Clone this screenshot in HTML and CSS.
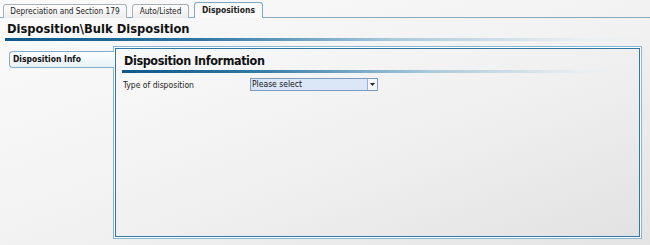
FILE: index.html
```html
<!DOCTYPE html>
<html>
<head>
<meta charset="utf-8">
<link rel="stylesheet" href="styles.css">
</head>
<body>
<div class="page">
  <div class="tabs">
    <div class="tab tab-1">Depreciation and Section 179</div>
    <div class="tab tab-2">Auto/Listed</div>
    <div class="tab tab-active">Dispositions</div>
  </div>
  <div class="title">Disposition\Bulk Disposition</div>
  <div class="title-rule"></div>
  <div class="content">
    <div class="nav">
      <div class="nav-item">Disposition Info</div>
    </div>
    <div class="panel">
      <div class="panel-inner">
        <div class="panel-title">Disposition Information</div>
        <div class="panel-rule"></div>
        <div class="row">
          <div class="label">Type of disposition</div>
          <div class="select">
            <span class="select-text">Please select</span>
            <span class="select-btn"><svg width="5" height="3" viewBox="0 0 5 3"><path d="M0 0h5L2.5 3z" fill="#222"/></svg></span>
          </div>
        </div>
      </div>
    </div>
  </div>
</div>
</body>
</html>
```
FILE: styles.css
```css
* { box-sizing: border-box; }
html, body { margin: 0; padding: 0; }
body {
  width: 650px;
  height: 245px;
  overflow: hidden;
  background: linear-gradient(160deg, #fbfbfb 0%, #f2f2f2 50%, #e4e4e4 100%);
  font-family: "DejaVu Sans Condensed", "DejaVu Sans", sans-serif;
  color: #111;
}
.page { height: 245px; display: flex; flex-direction: column; }
.tabs {
  display: flex;
  align-items: flex-end;
  gap: 5px;
  height: 18px;
  padding-left: 3px;
  border-bottom: 1px solid #86a9bf;
}
.tab {
  height: 14px;
  margin-bottom: -1px;
  border: 1px solid #a9b1b6;
  border-bottom: none;
  border-radius: 3px 3px 0 0;
  background: linear-gradient(#ffffff, #ececec);
  font-size: 8.2px;
  line-height: 13px;
  white-space: nowrap;
  text-align: center;
  color: #222;
}
.tab-1 { width: 124px; }
.tab-2 { width: 57px; }
.tab-active {
  width: 69px;
  height: 16px;
  line-height: 15px;
  border-color: #7fa9c2;
  background: #fafafa;
  font-weight: bold;
  font-size: 8.5px;
}
.title {
  font-weight: bold;
  font-size: 12.8px;
  line-height: 17px;
  padding: 2px 0 0 7px;
  height: 20px;
  color: #111;
}
.title-rule {
  height: 3px;
  margin-left: 5px;
  background: linear-gradient(90deg, #0e5889 0%, #2d77a6 30%, #a9c9dc 60%, rgba(230,238,243,0.6) 90%, rgba(240,240,240,0) 100%);
}
.content {
  display: flex;
  flex: 1;
  padding: 5px 8px 6px 9px;
}
.nav { width: 104px; padding-top: 5px; position: relative; z-index: 1; }
.nav-item {
  height: 17px;
  width: 105px;
  border: 1px solid #84aec6;
  border-right: none;
  border-radius: 4px 0 0 4px;
  background: linear-gradient(#ffffff, #e6f0f6);
  font-size: 8.5px;
  font-weight: bold;
  line-height: 15px;
  padding-left: 3px;
}
.panel {
  flex: 1;
  border: 1px solid #86b6d0;
  padding: 1px;
  background: #fff;
}
.panel-inner {
  height: 100%;
  border: 1px solid #2f78a4;
  background: linear-gradient(160deg, #f9f9f9 0%, #efefef 55%, #e2e2e2 100%);
  padding: 4px 6px 0 6px;
}
.panel-title {
  font-weight: bold;
  font-size: 12.5px;
  letter-spacing: -0.4px;
  line-height: 16px;
  padding-left: 2px;
}
.panel-rule {
  height: 3px;
  margin-top: 1px;
  background: linear-gradient(90deg, #0e5889 0%, #2d77a6 25%, #a9c9dc 60%, rgba(230,238,243,0.6) 90%, rgba(240,240,240,0) 100%);
}
.row {
  display: flex;
  align-items: center;
  margin-top: 5px;
}
.label {
  width: 128px;
  font-size: 8.5px;
  padding-left: 1px;
  color: #222;
}
.select {
  display: flex;
  width: 128px;
  height: 13px;
  border: 1px solid #7b9cc0;
  background: #dbe7f6;
}
.select-text {
  flex: 1;
  font-size: 8.5px;
  line-height: 11px;
  padding-left: 1px;
}
.select-btn {
  width: 10px;
  border-left: 1px solid #9ab3cf;
  background: #f4f6f9;
  display: flex;
  align-items: center;
  justify-content: center;
}
```
